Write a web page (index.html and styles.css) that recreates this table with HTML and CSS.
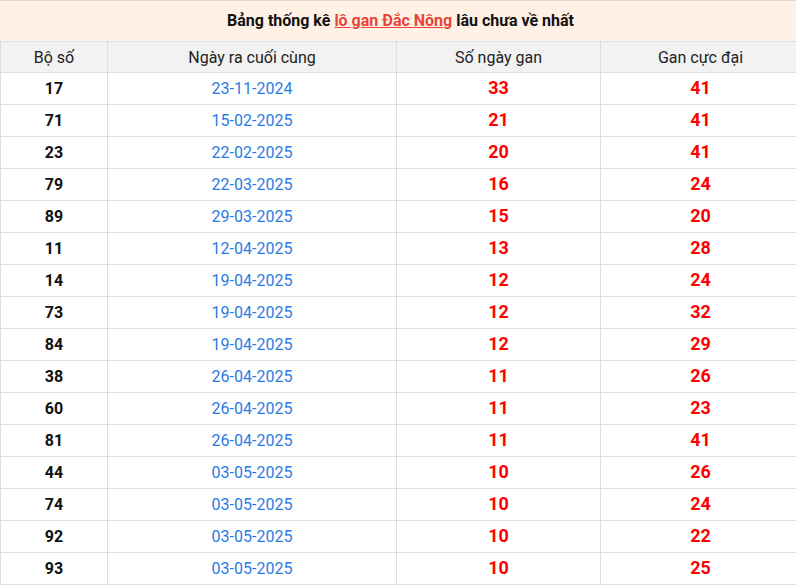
FILE: index.html
```html
<!DOCTYPE html>
<html lang="vi">
<head>
<meta charset="utf-8">
<title>Lô gan Đắc Nông</title>
<link rel="stylesheet" href="styles.css">
</head>
<body>
<div class="wrap">
  <div class="title">Bảng thống kê <a href="#" class="link">lô gan Đắc Nông</a> lâu chưa về nhất</div>
  <table class="gan">
    <colgroup>
      <col class="c1"><col class="c2"><col class="c3"><col class="c4">
    </colgroup>
    <thead>
      <tr><th>Bộ số</th><th>Ngày ra cuối cùng</th><th>Số ngày gan</th><th class="last">Gan cực đại</th></tr>
    </thead>
    <tbody>
      <tr><td class="num">17</td><td class="date">23-11-2024</td><td class="red">33</td><td class="red last">41</td></tr>
      <tr><td class="num">71</td><td class="date">15-02-2025</td><td class="red">21</td><td class="red last">41</td></tr>
      <tr><td class="num">23</td><td class="date">22-02-2025</td><td class="red">20</td><td class="red last">41</td></tr>
      <tr><td class="num">79</td><td class="date">22-03-2025</td><td class="red">16</td><td class="red last">24</td></tr>
      <tr><td class="num">89</td><td class="date">29-03-2025</td><td class="red">15</td><td class="red last">20</td></tr>
      <tr><td class="num">11</td><td class="date">12-04-2025</td><td class="red">13</td><td class="red last">28</td></tr>
      <tr><td class="num">14</td><td class="date">19-04-2025</td><td class="red">12</td><td class="red last">24</td></tr>
      <tr><td class="num">73</td><td class="date">19-04-2025</td><td class="red">12</td><td class="red last">32</td></tr>
      <tr><td class="num">84</td><td class="date">19-04-2025</td><td class="red">12</td><td class="red last">29</td></tr>
      <tr><td class="num">38</td><td class="date">26-04-2025</td><td class="red">11</td><td class="red last">26</td></tr>
      <tr><td class="num">60</td><td class="date">26-04-2025</td><td class="red">11</td><td class="red last">23</td></tr>
      <tr><td class="num">81</td><td class="date">26-04-2025</td><td class="red">11</td><td class="red last">41</td></tr>
      <tr><td class="num">44</td><td class="date">03-05-2025</td><td class="red">10</td><td class="red last">26</td></tr>
      <tr><td class="num">74</td><td class="date">03-05-2025</td><td class="red">10</td><td class="red last">24</td></tr>
      <tr><td class="num">92</td><td class="date">03-05-2025</td><td class="red">10</td><td class="red last">22</td></tr>
      <tr><td class="num">93</td><td class="date">03-05-2025</td><td class="red">10</td><td class="red last">25</td></tr>
    </tbody>
  </table>
</div>
</body>
</html>
```
FILE: styles.css
```css
html, body {
  margin: 0;
  padding: 0;
  background: #fff;
  font-family: Roboto, "Liberation Sans", Arial, sans-serif;
  color: #111;
}
.wrap {
  width: 796px;
  border-top: 1px solid #dddddd;
}
.title {
  height: 40px;
  line-height: 40px;
  background: #fff1e6;
  text-align: center;
  font-size: 16px;
  font-weight: bold;
  color: #111;
  padding-left: 5px;
}
.link {
  color: #e8453a;
  text-decoration: underline;
}
.gan {
  width: 796px;
  border-collapse: collapse;
  table-layout: fixed;
}
.c1 { width: 107px; }
.c2 { width: 289px; }
.c3 { width: 204px; }
.c4 { width: 196px; }
.gan th, .gan td {
  border: 1px solid #dddddd;
  text-align: center;
  padding: 0;
}
.gan th {
  height: 30px;
  background: #f2f2f2;
  font-weight: normal;
  font-size: 16px;
  color: #222;
}
.gan td {
  height: 31px;
}
.gan .last {
  padding-left: 4px;
}
.num {
  font-weight: bold;
  font-size: 16px;
  color: #111;
}
.date {
  font-size: 16px;
  color: #2a7be4;
}
.gan td.red {
  font-weight: bold;
  font-size: 18px;
  color: #ff0000;
  padding-bottom: 2px;
  height: 29px;
}
```
